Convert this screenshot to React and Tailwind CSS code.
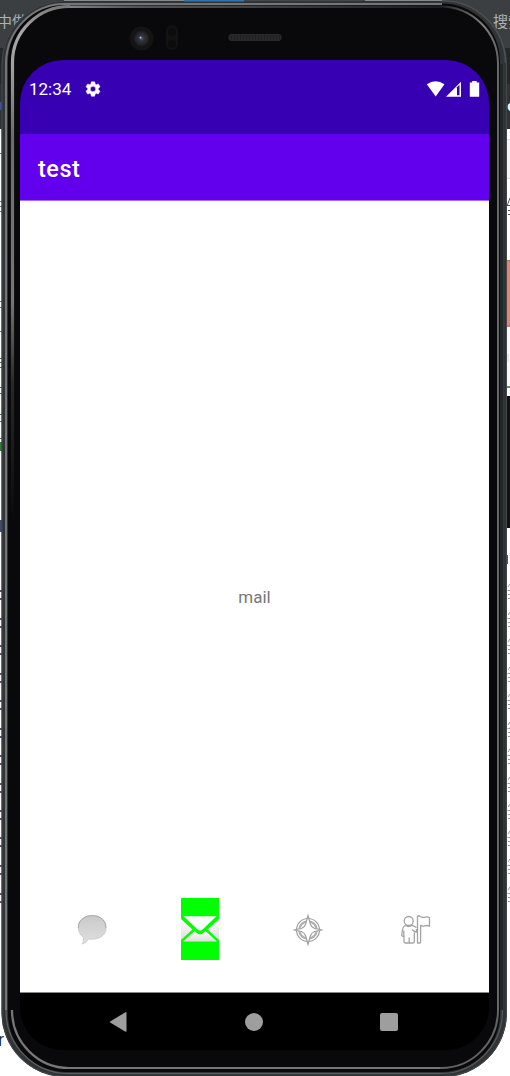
import React from 'react';

const tickRows = [590, 618, 645, 673, 700, 728, 755, 783, 810, 837, 865, 893];

function Backdrop() {
  return (
    <div className="absolute inset-0 flex flex-col overflow-hidden bg-white font-['Liberation_Sans','Noto_Sans_CJK_SC',sans-serif]">
      <div className="flex h-12 shrink-0 items-start justify-between bg-[#3c3f41] pt-[11px] text-[15px] leading-[22px] text-[#aeb2b5]">
        <span className="-ml-[3px] whitespace-nowrap">中做</span>
        <span className="-mr-[13px] whitespace-nowrap">搜索</span>
      </div>
      <div className="h-9 shrink-0 bg-[#252729]" />
      <div className="flex h-[45px] shrink-0 items-center justify-end bg-[#303234] text-[14px] font-bold text-white">
        <span className="-mr-[5px]">c</span>
      </div>
      <svg className="absolute inset-0" width="510" height="1076" viewBox="0 0 510 1076">
        <path d="M0 102h2v8h-2z" fill="#3d55a0" />
        <path d="M506 140h4v38h-4z" fill="#f4f5f7" />
        <path d="M506 139.500h4M506 178.500h4" stroke="#ddd" />
        <path d="M507 206l3-8M506 205.500h4M508 210.500h2M508 214.500h2" stroke="#555" fill="none" />
        <path d="M506 260h4v67h-4z" fill="#e8836c" />
        <path d="M506 260.500h4M506 326h4" stroke="#c66650" />
        <path d="M506 327h4v58h-4z" fill="#f9f9f9" />
        <path d="M508 354v8" stroke="#ddd" />
        <path d="M506 387h4" stroke="#4f9c50" strokeWidth="2" />
        <path d="M506 396h4v132h-4z" fill="#111214" />
        <path d="M507.500 555v9" stroke="#555" />
        <path d="M0 153.500h2M0 201.500h2M0 206.500h2M0 211.500h2M0 301.500h2M0 307.500h2M0 331.500h2" stroke="#777" />
        <path d="M0 358.500h2M0 362.500h2M0 367.500h2M0 387.500h2M0 393.500h2M0 414.500h2M0 421.500h2M0 438.500h2" stroke="#4e7653" />
        <path d="M0 442h2v9h-2z" fill="#347d3a" />
        <path d="M0 520h2v12h-2z" fill="#454c72" />
        {tickRows.map((y) => (
          <g key={y} fill="none">
            <path d={`M0 ${y + 1}h3M0 ${y + 9}h3`} stroke="#65516c" strokeWidth="2" />
            <path d={`M508 ${y - 3}l2-3M507.5 ${y + 0.5}h3M508 ${y + 4.5}h2M508 ${y + 8.5}h2`} stroke="#9b9da6" />
          </g>
        ))}
      </svg>
      <span className="absolute left-[-2px] top-[1029px] text-[18px] leading-[22px] text-[#222]">r</span>
    </div>
  );
}

function DeviceHardware() {
  return (
    <svg className="absolute inset-0" width="510" height="1076" viewBox="0 0 510 1076" fill="none">
      <defs>
        <linearGradient id="rim" x1="0" y1="5" x2="0" y2="530" gradientUnits="userSpaceOnUse">
          <stop stopColor="#777" />
          <stop offset=".05" stopColor="#a8a8a8" />
          <stop offset=".12" stopColor="#a0a0a0" />
          <stop offset=".25" stopColor="#6c6c6c" />
          <stop offset=".56" stopColor="#777" />
          <stop offset=".72" stopColor="#292929" />
          <stop offset="1" stopColor="#08080a" />
        </linearGradient>
        <linearGradient id="topRim" x1="60" y1="0" x2="440" y2="0" gradientUnits="userSpaceOnUse">
          <stop stopColor="#888" />
          <stop offset=".2" stopColor="#555" />
          <stop offset="1" stopColor="#1d1d1e" />
        </linearGradient>
        <linearGradient id="rightRim" x1="440" y1="0" x2="498" y2="0" gradientUnits="userSpaceOnUse">
          <stop stopColor="#202022" />
          <stop offset=".75" stopColor="#808080" />
          <stop offset="1" stopColor="#666" />
        </linearGradient>
        <pattern id="mesh" width="3" height="8" patternUnits="userSpaceOnUse">
          <path d="M0 0h3v8h-3z" fill="#282828" />
          <path d="M0 0v8" stroke="#171717" />
        </pattern>
        <radialGradient id="lens">
          <stop stopColor="#59636e" />
          <stop offset=".3" stopColor="#30353c" />
          <stop offset=".7" stopColor="#25272c" />
          <stop offset="1" stopColor="#171719" />
        </radialGradient>
      </defs>
      <rect x="1.500" y="0" width="505.500" height="1077" rx="64" fill="#303436" />
      <rect x="2" y=".5" width="504.500" height="1076" rx="63.500" stroke="#44484a" />
      <rect x="8" y="3.500" width="492" height="1068.500" rx="58" fill="#09090b" />
      <path d="M6 1010V64A58.500 60 0 0 1 65 4H442" stroke="#74777a" strokeWidth="2" />
      <path d="M6 1010A62 63 0 0 0 68 1073.500H442" stroke="#5e6162" strokeWidth="1.200" />
      <path d="M12.500 530V63A57 56 0 0 1 70 6.500" stroke="url(#rim)" strokeWidth="3.200" />
      <path d="M70 6.800H440" stroke="url(#topRim)" strokeWidth="2.600" />
      <path d="M440 6.500A58 57 0 0 1 498 63" stroke="url(#rightRim)" strokeWidth="2" />
      <path d="M498 63V1010" stroke="#666869" strokeWidth="2" />
      <path d="M498 1010A57 58 0 0 1 440 1068" stroke="#606264" strokeWidth="2" />
      <path d="M12 1010A57 58 0 0 0 70 1068H440" stroke="#77777b" strokeWidth="2.200" />
      <path d="M64 .5H184M365 .5H442" stroke="#85878a" />
      <path d="M442 .800A63 63 0 0 1 505.500 63" stroke="#4c4f52" strokeWidth="1.500" />
      <path d="M184 0H244V1.500H184Z" fill="#3572a8" />
      <path d="M501.500 64V1010" stroke="#252829" strokeWidth="3" />
      <path d="M440 1073.500A62 63 0 0 0 502.500 1010" stroke="#56595b" strokeWidth="1.200" />
      <circle cx="141.500" cy="38.500" r="12" fill="#141415" />
      <circle cx="141.500" cy="38.500" r="8" fill="url(#lens)" />
      <circle cx="140.500" cy="37.500" r="1" fill="#a9bccd" />
      <rect x="166" y="25" width="12" height="25" rx="6" fill="#121213" />
      <circle cx="172" cy="32" r="4" fill="#0c0c0d" />
      <circle cx="172" cy="44" r="4" fill="#0c0c0d" />
      <rect x="229" y="34.500" width="52" height="6" rx="2" fill="url(#mesh)" stroke="#292929" />
    </svg>
  );
}

function StatusBar() {
  return (
    <div className="flex h-[74px] shrink-0 items-start bg-[#3700b3] pt-[20px] text-white">
      <span className="-mt-px ml-[9px] w-[43px] whitespace-nowrap text-[17px] leading-5">12:34</span>
      <svg className="ml-[12px]" width="18" height="18" viewBox="0 0 24 24" fill="currentColor" stroke="currentColor" strokeWidth=".65">
        <path d="M19.14 12.940c.04-.3.06-.61.06-.94 0-.32-.02-.64-.07-.94l2.030-1.580a.49.49 0 0 0 .12-.61l-1.920-3.320a.49.49 0 0 0-.59-.22l-2.390.96a7 7 0 0 0-1.620-.94l-.36-2.540a.48.48 0 0 0-.48-.41h-3.840a.47.47 0 0 0-.47.41l-.36 2.540a7 7 0 0 0-1.620.94l-2.390-.96a.48.48 0 0 0-.59.22L2.740 8.870a.47.47 0 0 0 .12.610l2.030 1.580a6 6 0 0 0-.02 1.880l-2.030 1.580a.49.49 0 0 0-.12.610l1.920 3.320c.12.220.37.290.59.220l2.390-.96c.5.380 1.030.7 1.620.94l.36 2.540c.05.240.24.410.48.410h3.840c.24 0 .44-.17.470-.41l.36-2.540a7 7 0 0 0 1.620-.94l2.390.96c.22.080.47 0 .59-.22l1.920-3.320a.47.47 0 0 0-.12-.61ZM12 15.600A3.600 3.600 0 1 1 12 8.400a3.600 3.600 0 0 1 0 7.200Z" />
      </svg>
      <svg className="ml-auto mr-[9px]" width="54" height="18" viewBox="0 0 54 18">
        <path d="M.8 4.200Q9.500-1.500 18.500 4.200L9.700 16.500Z" fill="currentColor" />
        <path d="M20 16.800L35 1.800V16.800Z" fill="currentColor" />
        <path d="M31 7.200l2.500-2.500V15.300H31Z" fill="#3700b3" />
        <path d="M43.800 2.600h2.400V1h4.500v1.600h2.500v14.100h-9.400Z" fill="currentColor" />
      </svg>
    </div>
  );
}

function TabIcons() {
  return (
    <div className="grid h-[126px] shrink-0 grid-cols-4 px-[18px]">
      <div className="flex justify-center pt-[46px]">
        <svg width="34" height="34" viewBox="0 0 34 34">
          <defs>
            <linearGradient id="bubble" x2="0" y2="1">
              <stop stopColor="#c9c9c9" />
              <stop offset="1" stopColor="#e0e0e0" />
            </linearGradient>
          </defs>
          <path d="M17.500 3.500C9 3.500 3.300 8.500 3.300 15.300c0 4.500 2 8 5.200 10 .1 2.500-.2 4.500-1 6.800 2.500-1.300 4.800-3 6-5.200 10.200 1.500 17.600-3.500 17.600-11.200C31 8.500 25.500 3.500 17.500 3.500Z" fill="url(#bubble)" stroke="#ccc" />
          <path d="M3.400 16C2.800 9 9 3.500 17.500 3.600 26 3.700 31 9 30.800 15.800" fill="none" stroke="#aaa" />
        </svg>
      </div>
      <div className="flex justify-center pt-[32px]">
        <svg width="38" height="62" viewBox="0 0 38 62">
          <defs>
            <linearGradient id="paper" x2="0" y2="1">
              <stop stopColor="#fff" />
              <stop offset="1" stopColor="#ddd" />
            </linearGradient>
          </defs>
          <path d="M0 0h38v62H0Z" fill="#0f0" />
          <path d="M2.500 18.300h33L22 31Q19 34.500 16 31Z" fill="#fcfcfc" />
          <path d="M0 21l11.500 10.500L0 42ZM38 21L26.500 31.500 38 42Z" fill="url(#paper)" />
          <path d="M2 43.600L13.500 32.900l2 1.800q3.500 3.400 7 0l2-1.800L36 43.600Z" fill="url(#paper)" />
        </svg>
      </div>
      <div className="flex justify-center pr-[2px] pt-[47px]">
        <svg width="34" height="34" viewBox="0 0 34 34" fill="none" stroke="#a0a0a0" strokeWidth="1.200">
          <circle cx="17" cy="17" r="11.500" />
          <circle cx="17" cy="17" r="8.700" stroke="#b0b0b0" strokeWidth="2.200" />
          <path d="M17 2.500L19.300 11q1 3.300 4.300 4.500l7.900 1.500-7.900 1.500q-3.300 1.200-4.300 4.500L17 31.500 14.700 23q-1-3.300-4.300-4.500L2.500 17l7.900-1.500q3.300-1.200 4.300-4.500Z" fill="#fff" />
        </svg>
      </div>
      <div className="flex justify-center pr-[1px] pt-[47px]">
        <svg width="34" height="34" viewBox="0 0 34 34" fill="none" stroke="#a3a3a3" strokeWidth="1.300" strokeLinejoin="round">
          <path d="M6 12.500C3.700 13.600 3.400 16 3.200 19l-.5 3.600q.5 1.100 2.300.6v5.500q0 1.300 1.600 1.300h7.200q1.500 0 1.500-1.300V19.500M6 12.500q3.500 2.200 7.200-.2L17.500 14.500" />
          <path d="M10.200 30v-5.500M4.800 17.500v5.500" />
          <circle cx="9.700" cy="8" r="4.500" />
          <path d="M18.500 30V3.500q1.200-1.500 2.500 0 2 1.300 4.300.8 3-1 5.200.4v8.600q-2.300-1.300-4.800-.5-2.200.8-4.100-.4V29q0 1-1 1Z" />
          <path d="M13 16.500l2.500 2 2 .5v-3" />
        </svg>
      </div>
    </div>
  );
}

function NavigationBar() {
  return (
    <div className="flex h-[58px] shrink-0 items-center justify-between border-t border-[#888] bg-black pl-[88px] pr-[91px] text-[#9e9e9e]">
      <svg width="20" height="22" viewBox="0 0 20 22" fill="currentColor">
        <path d="M17.500 1.200q1-.5 1 .7v18.200q0 1.100-1 .6L2.200 11.600q-1-.6 0-1.200Z" />
      </svg>
      <span className="size-[18px] rounded-full bg-[#9e9e9e]" />
      <span className="size-[18px] rounded-[2px] bg-[#9e9e9e]" />
    </div>
  );
}

export default function App() {
  return (
    <main className="relative h-[1076px] w-[510px] overflow-hidden bg-white font-['Roboto',sans-serif]">
      <Backdrop />
      <DeviceHardware />
      <div className="relative h-full pl-[20px] pr-[21px] pt-[60px]">
        <section className="flex h-[990px] flex-col overflow-hidden rounded-[43px] bg-black">
          <StatusBar />
          <header className="flex h-[67px] shrink-0 items-center border-b border-[#a56cf3] bg-[#6200ee] pl-[18px] pt-[3px] text-[23.500px] font-medium leading-7 tracking-[0.5px] text-white">
            test
          </header>
          <div className="flex flex-1 flex-col bg-white">
            <div className="flex flex-1 items-end justify-center pb-[257px] text-[17px] leading-6 text-[#777]">
              mail
            </div>
            <TabIcons />
          </div>
          <NavigationBar />
        </section>
      </div>
    </main>
  );
}
